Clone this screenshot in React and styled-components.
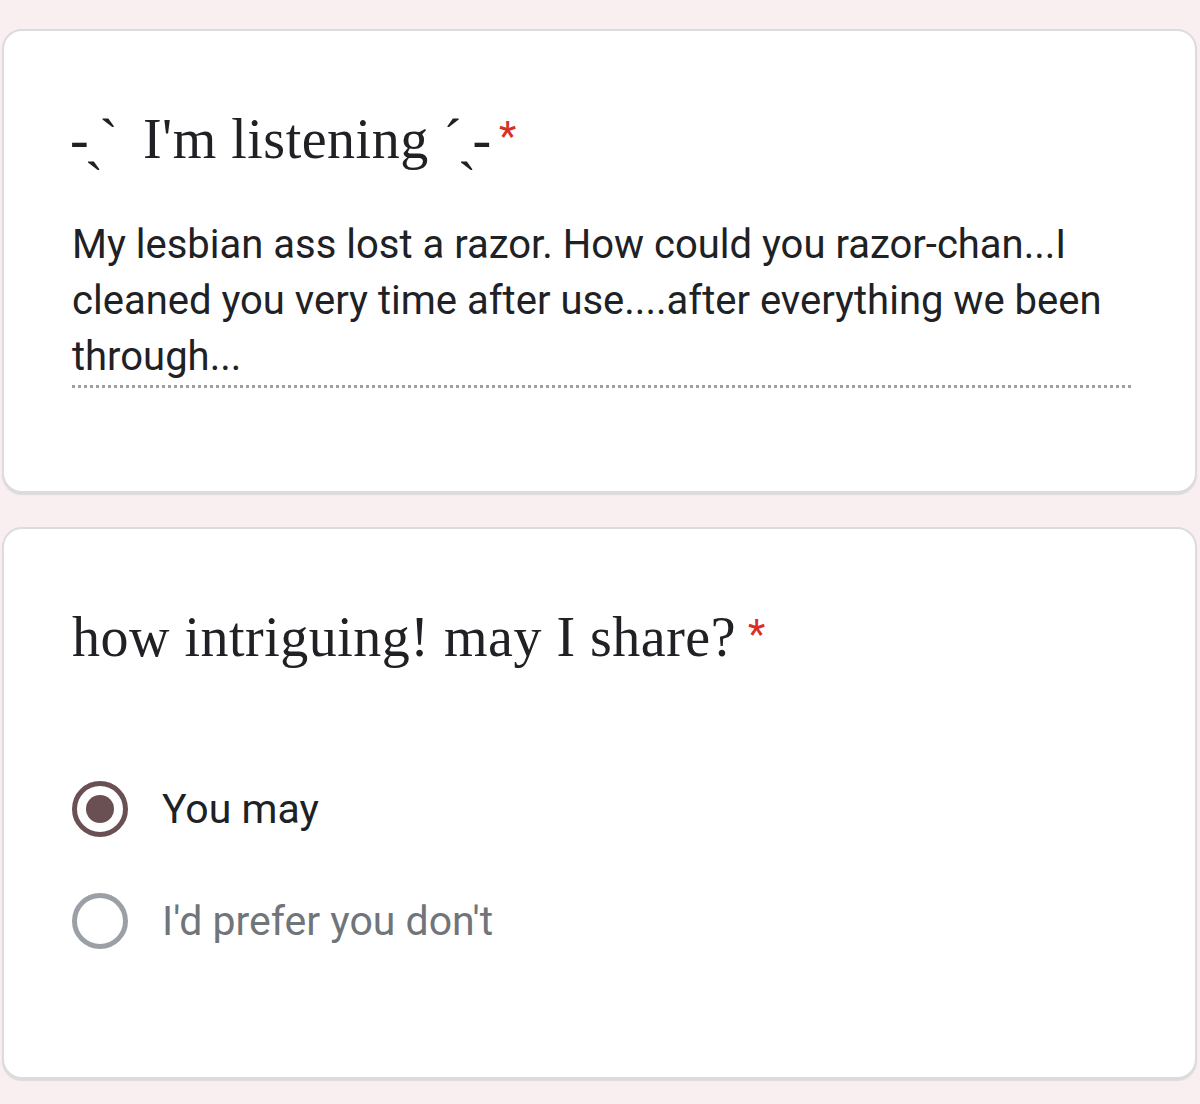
import React from "react";
import styled, { createGlobalStyle } from "styled-components";

const Global = createGlobalStyle`
  html, body { margin: 0; padding: 0; background: #f9eff0; }
  body { width: 1200px; height: 1104px; overflow: hidden; }
`;

const Page = styled.div`
  display: flex;
  flex-direction: column;
  gap: 34px;
  padding: 29px 3px 0 2px;
`;

const Card = styled.section`
  background: #fff;
  border: 2px solid #dadce0;
  border-radius: 20px;
  padding: ${(p) => p.$pad};
  height: ${(p) => p.$h}px;
  box-sizing: border-box;
  box-shadow: 0 2px 1px rgba(60, 64, 67, 0.12);
`;

const Title = styled.h2`
  margin: 0;
  font-family: "Liberation Serif", "DejaVu Serif", serif;
  font-weight: 400;
  font-size: 56px;
  color: #202124;
  letter-spacing: 0.5px;
  line-height: 60px;
`;

const Deco = styled.span`
  letter-spacing: -4px;
  margin: ${(p) => p.$m};
`;

const Star = styled.span`
  color: #d93025;
  margin-left: 12px;
  font-family: Roboto, "Liberation Sans", sans-serif;
  font-size: 40px;
  vertical-align: 8px;
`;

const Answer = styled.div`
  margin-top: 48px;
  font-family: Roboto, "Liberation Sans", sans-serif;
  font-size: 40px;
  line-height: 56px;
  color: #202124;
  padding-bottom: 0;
  border-bottom: 3px dotted #9aa0a6;
  margin-right: 64px;
`;

const Options = styled.div`
  margin-top: 114px;
  display: flex;
  flex-direction: column;
  gap: 56px;
`;

const Option = styled.label`
  display: flex;
  align-items: center;
  gap: 34px;
  font-family: Roboto, "Liberation Sans", sans-serif;
  font-size: 41px;
  color: ${(p) => (p.$checked ? "#202124" : "#70757a")};
`;

const Radio = styled.span`
  width: 56px;
  height: 56px;
  box-sizing: border-box;
  border-radius: 50%;
  border: 5px solid ${(p) => (p.$checked ? "#6a5052" : "#9aa0a6")};
  display: flex;
  align-items: center;
  justify-content: center;
  flex-shrink: 0;
  &::after {
    content: "";
    display: ${(p) => (p.$checked ? "block" : "none")};
    width: 28px;
    height: 28px;
    border-radius: 50%;
    background: #6a5052;
  }
`;

export default function App() {
  return (
    <>
      <Global />
      <Page>
        <Card $pad="76px 0 0 68px" $h={464}>
          <Title>
            <Deco $m="0 0 0 -2px">-ˏˋ</Deco>
            {"\u00a0\u00a0"}I'm listening <Deco $m="0">ˊˎ-</Deco>
            <Star>*</Star>
          </Title>
          <Answer>
            My lesbian ass lost a razor. How could you razor-chan...I cleaned
            you very time after use....after everything we been through...
          </Answer>
        </Card>
        <Card $pad="76px 0 0 68px" $h={552}>
          <Title>
            how intriguing! may I share?<Star>*</Star>
          </Title>
          <Options>
            <Option $checked>
              <Radio $checked />
              You may
            </Option>
            <Option>
              <Radio />
              I'd prefer you don't
            </Option>
          </Options>
        </Card>
      </Page>
    </>
  );
}
